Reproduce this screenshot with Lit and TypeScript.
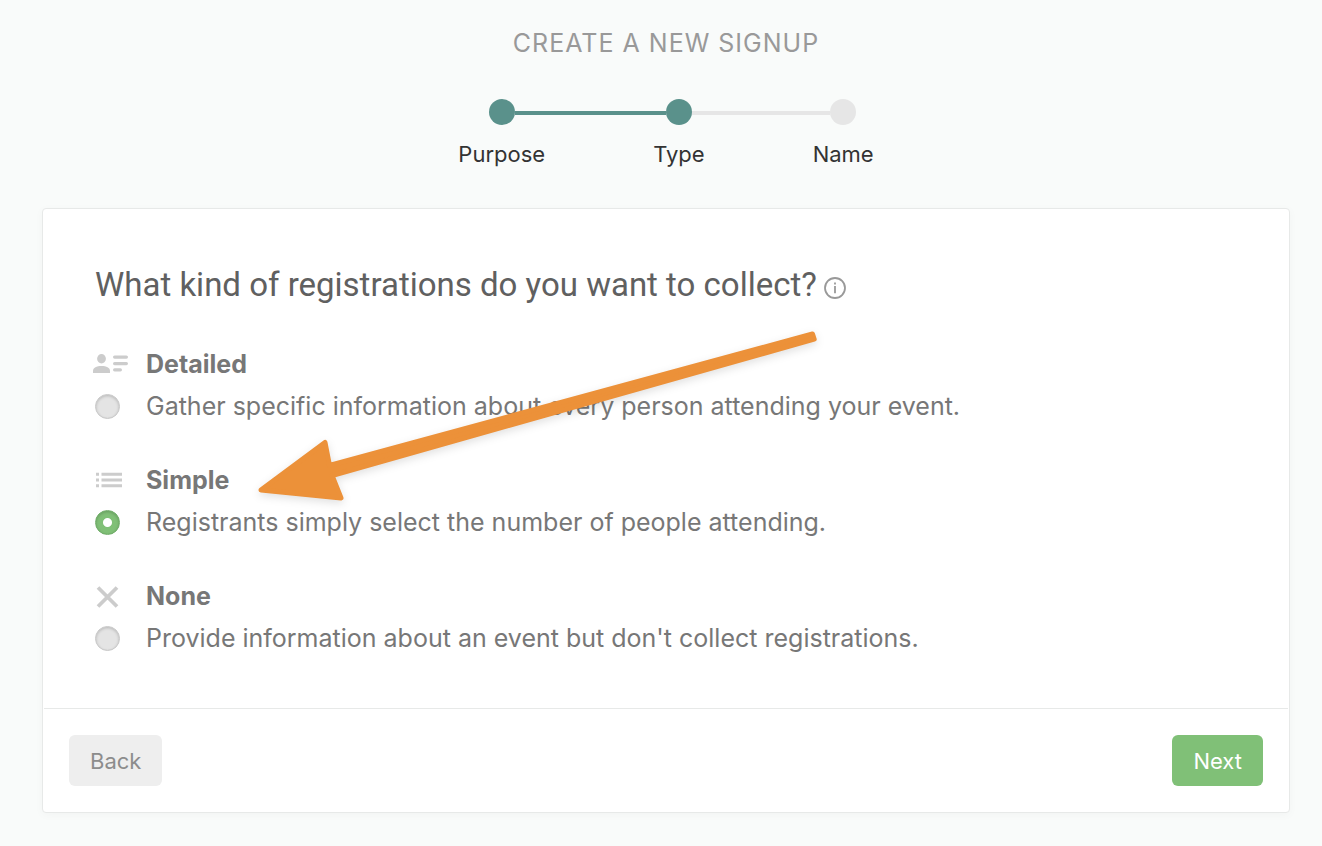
import { LitElement, html, css, svg } from "lit";
import { customElement, state } from "lit/decorators.js";
import { classMap } from "lit/directives/class-map.js";

const detailedIcon = svg`
  <ellipse cx="8.500" cy="7.700" rx="4.400" ry="4.700" />
  <path d="M0 22v-2c0-3.400 3.600-5 8.500-5s8.500 1.600 8.500 5v2z" />
  <rect x="20" y="4.500" width="15" height="3.200" rx="1.600" />
  <rect x="20" y="11" width="15" height="3.200" rx="1.600" />
  <rect x="20" y="17.200" width="9" height="3.200" rx="1.600" />`;

const simpleIcon = svg`
  <path d="M3 5.700h3v3H3zM8.500 5.700h20.500v3H8.500zM3 11.500h3v3H3zM8.500 11.500h20.500v3H8.500zM3 17.300h3v3H3zM8.500 17.300h20.500v3H8.500z" />`;

const noneIcon = svg`
  <path d="M5 4.500l19 19M24 4.500l-19 19" fill="none" stroke="currentColor" stroke-width="3.800" />`;

const options = [
  { id: "detailed", title: "Detailed", text: "Gather specific information about every person attending your event.", icon: detailedIcon },
  { id: "simple", title: "Simple", text: "Registrants simply select the number of people attending.", icon: simpleIcon },
  { id: "none", title: "None", text: "Provide information about an event but don't collect registrations.", icon: noneIcon },
];

const steps = ["Purpose", "Type", "Name"];

@customElement("app-root")
export class AppRoot extends LitElement {
  @state() selected = "simple";
  @state() current = 1;

  static styles = css`
    :host {
      display: block;
      box-sizing: border-box;
      min-height: 100vh;
      padding: 24px 32px 32px 42px;
      background: #f9fbfa;
      font-family: Inter, "Liberation Sans", sans-serif;
      color: #777;
    }
    .title {
      margin: 0;
      font-size: 25px;
      line-height: 38px;
      font-weight: 400;
      letter-spacing: 1px;
      text-align: center;
      text-transform: uppercase;
      color: #999;
    }
    .steps {
      display: flex;
      justify-content: center;
      list-style: none;
      margin: 37px 0 39px;
      padding: 0;
    }
    .step {
      display: grid;
      grid-template-columns: 1fr 26px 1fr;
      align-items: center;
      font-size: 22px;
      line-height: 30px;
      color: #333;
    }
    .dot {
      height: 26px;
      border-radius: 50%;
      background: #e6e6e6;
    }
    .line {
      height: 4px;
      margin-top: 2px;
      background: #e6e6e6;
    }
    .done {
      background: #5a918b;
    }
    .blank {
      background: none;
    }
    .label {
      grid-column: 1 / -1;
      margin-top: 14px;
      padding: 0 54px;
    }
    .card {
      position: relative;
      background: #fff;
      border: 1px solid #e7e9e8;
      border-radius: 4px;
      box-shadow: 0 2px 10px rgba(0, 0, 0, 0.03);
    }
    .body {
      padding: 52px 52px 49px;
    }
    .question {
      display: flex;
      align-items: center;
      gap: 7px;
      margin-bottom: 34px;
    }
    .heading {
      margin: 0;
      font-family: Roboto, Inter, sans-serif;
      font-size: 33px;
      line-height: 48px;
      font-weight: 400;
      color: #606060;
    }
    .info {
      width: 22px;
      height: 22px;
      margin-top: 6px;
      padding: 0;
      border: 0;
      background: none;
      color: #999;
    }
    .info svg {
      display: block;
    }
    .options {
      display: grid;
      gap: 32px;
      margin: 0;
      padding: 0;
      border: 0;
    }
    .option {
      display: grid;
      grid-template-columns: 51px 1fr;
      align-items: center;
      font-size: 25px;
      line-height: 42px;
    }
    .icon {
      width: 36px;
      height: 26px;
      margin-left: -2px;
      fill: #ccc;
      color: #ccc;
    }
    .name {
      font-weight: 700;
    }
    .radio {
      appearance: none;
      box-sizing: border-box;
      width: 25px;
      height: 25px;
      margin: 0;
      border: 1px solid #c8c8c8;
      border-radius: 50%;
      background: #e4e4e4;
      box-shadow: inset 0 1px 3px rgba(0, 0, 0, 0.2);
    }
    .radio:checked {
      border-color: #6dab66;
      background: radial-gradient(circle, #fff 4px, #80c077 5px);
    }
    .footer {
      display: flex;
      justify-content: space-between;
      margin: 0 1px;
      padding: 26px 25px;
      border-top: 1px solid #e7e9e8;
    }
    .button {
      padding: 1px 21px 0;
      border: 0;
      border-radius: 6px;
      font: 400 22px/50px Inter, "Liberation Sans", sans-serif;
    }
    .back {
      background: #eee;
      color: #8c8c8c;
    }
    .next {
      background: #80c077;
      color: #fff;
    }
    .arrow {
      position: absolute;
      left: 207px;
      top: 111px;
      width: 580px;
      height: 200px;
      pointer-events: none;
      filter: drop-shadow(0 3px 4px rgba(0, 0, 0, 0.12));
    }
  `;

  private lineClass(side: "left" | "right", index: number) {
    const blank = side === "left" ? index === 0 : index === steps.length - 1;
    const done = side === "left" ? index <= this.current : index < this.current;
    return classMap({ line: true, blank, done: done && !blank });
  }

  private go(delta: number) {
    this.current = Math.min(steps.length - 1, Math.max(0, this.current + delta));
  }

  render() {
    return html`
      <h1 class="title">Create a new signup</h1>
      <ol class="steps">
        ${steps.map(
          (label, i) => html`<li class="step">
            <span class=${this.lineClass("left", i)}></span>
            <span class=${classMap({ dot: true, done: i <= this.current })}></span>
            <span class=${this.lineClass("right", i)}></span>
            <span class="label">${label}</span>
          </li>`
        )}
      </ol>
      <main class="card">
        <div class="body">
          <div class="question">
            <h2 class="heading" id="question">What kind of registrations do you want to collect?</h2>
            <button class="info" type="button" aria-label="More information">
              <svg width="22" height="22" viewBox="0 0 22 22" fill="none" stroke="currentColor" aria-hidden="true">
                <circle cx="11" cy="11" r="10" stroke-width="1.800" />
                <path d="M11 9v7.200M11 5.500v2" stroke-width="1.800" />
              </svg>
            </button>
          </div>
          <fieldset class="options" aria-labelledby="question">
            ${options.map(
              (o) => html`<div class="option">
                <svg class="icon" viewBox="0 0 36 26" aria-hidden="true">${o.icon}</svg>
                <label class="name" for=${o.id}>${o.title}</label>
                <input
                  class="radio"
                  type="radio"
                  name="kind"
                  id=${o.id}
                  .checked=${this.selected === o.id}
                  @change=${() => (this.selected = o.id)}
                />
                <label for=${o.id}>${o.text}</label>
              </div>`
            )}
          </fieldset>
        </div>
        <div class="footer">
          <button class="button back" type="button" @click=${() => this.go(-1)}>Back</button>
          <button class="button next" type="button" @click=${() => this.go(1)}>Next</button>
        </div>
        <svg class="arrow" viewBox="250 320 580 200" aria-hidden="true">
          <path
            d="M261 490L325 442.500L329.500 465.500L812.500 334L814.200 339.200L332 475.500L341 498Z"
            fill="#ec9139"
            stroke="#ec9139"
            stroke-width="5"
            stroke-linejoin="round"
          />
        </svg>
      </main>
    `;
  }
}
